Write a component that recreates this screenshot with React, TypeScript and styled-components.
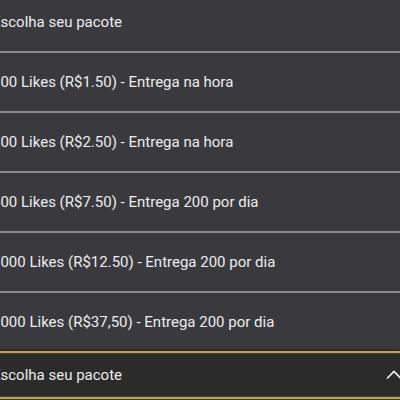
import React from "react";
import styled, { createGlobalStyle } from "styled-components";

const GlobalStyle = createGlobalStyle`
  html, body {
    margin: 0;
    padding: 0;
    background: #3a3a3e;
    overflow: hidden;
  }
`;

const Page = styled.div`
  width: 400px;
  height: 400px;
  overflow: hidden;
  background: #3a3a3e;
  font-family: Roboto, "Noto Sans", sans-serif;
`;

const List = styled.ul`
  list-style: none;
  margin: -7px 0 0 -8px;
  padding: 0;
`;

const Option = styled.li<{ $last?: boolean }>`
  height: 58px;
  display: flex;
  align-items: center;
  font-size: 15px;
  color: #ececee;
  white-space: nowrap;
  border-bottom: ${(p) => (p.$last ? "none" : "2px solid #8c8c8e")};
  box-shadow: ${(p) => (p.$last ? "inset 0 -3px 2px -1px rgba(0,0,0,0.25)" : "none")};
`;

const Select = styled.div`
  height: 44px;
  display: flex;
  align-items: center;
  justify-content: space-between;
  background: #2b2b2c;
  border-top: 2px solid #bda155;
  border-bottom: 2px solid #bda155;
  padding: 0;
  margin-left: -8px;
  color: #ececee;
  font-size: 15px;
  box-shadow: inset 0 1px 0 #4a3f22, inset 0 -1px 0 #4a3f22;
`;

const Label = styled.span`
  white-space: nowrap;
`;

const Chevron = styled.svg`
  width: 16px;
  height: 16px;
  flex: none;
  margin-right: -2px;
`;

const options = [
  "Escolha seu pacote",
  "100 Likes (R$1.50) - Entrega na hora",
  "200 Likes (R$2.50) - Entrega na hora",
  "500 Likes (R$7.50) - Entrega 200 por dia",
  "1000 Likes (R$12.50) - Entrega 200 por dia",
  "3000 Likes (R$37,50) - Entrega 200 por dia",
];

export default function App() {
  return (
    <Page>
      <GlobalStyle />
      <List>
        {options.map((o, i) => (
          <Option key={i} $last={i === options.length - 1}>
            {o}
          </Option>
        ))}
      </List>
      <Select>
        <Label>Escolha seu pacote</Label>
        <Chevron viewBox="0 0 16 16">
          <path d="M1 11.5 L8 4.5 L15 11.5" fill="none" stroke="#f2f2f2" strokeWidth="1.6" />
        </Chevron>
      </Select>
    </Page>
  );
}
